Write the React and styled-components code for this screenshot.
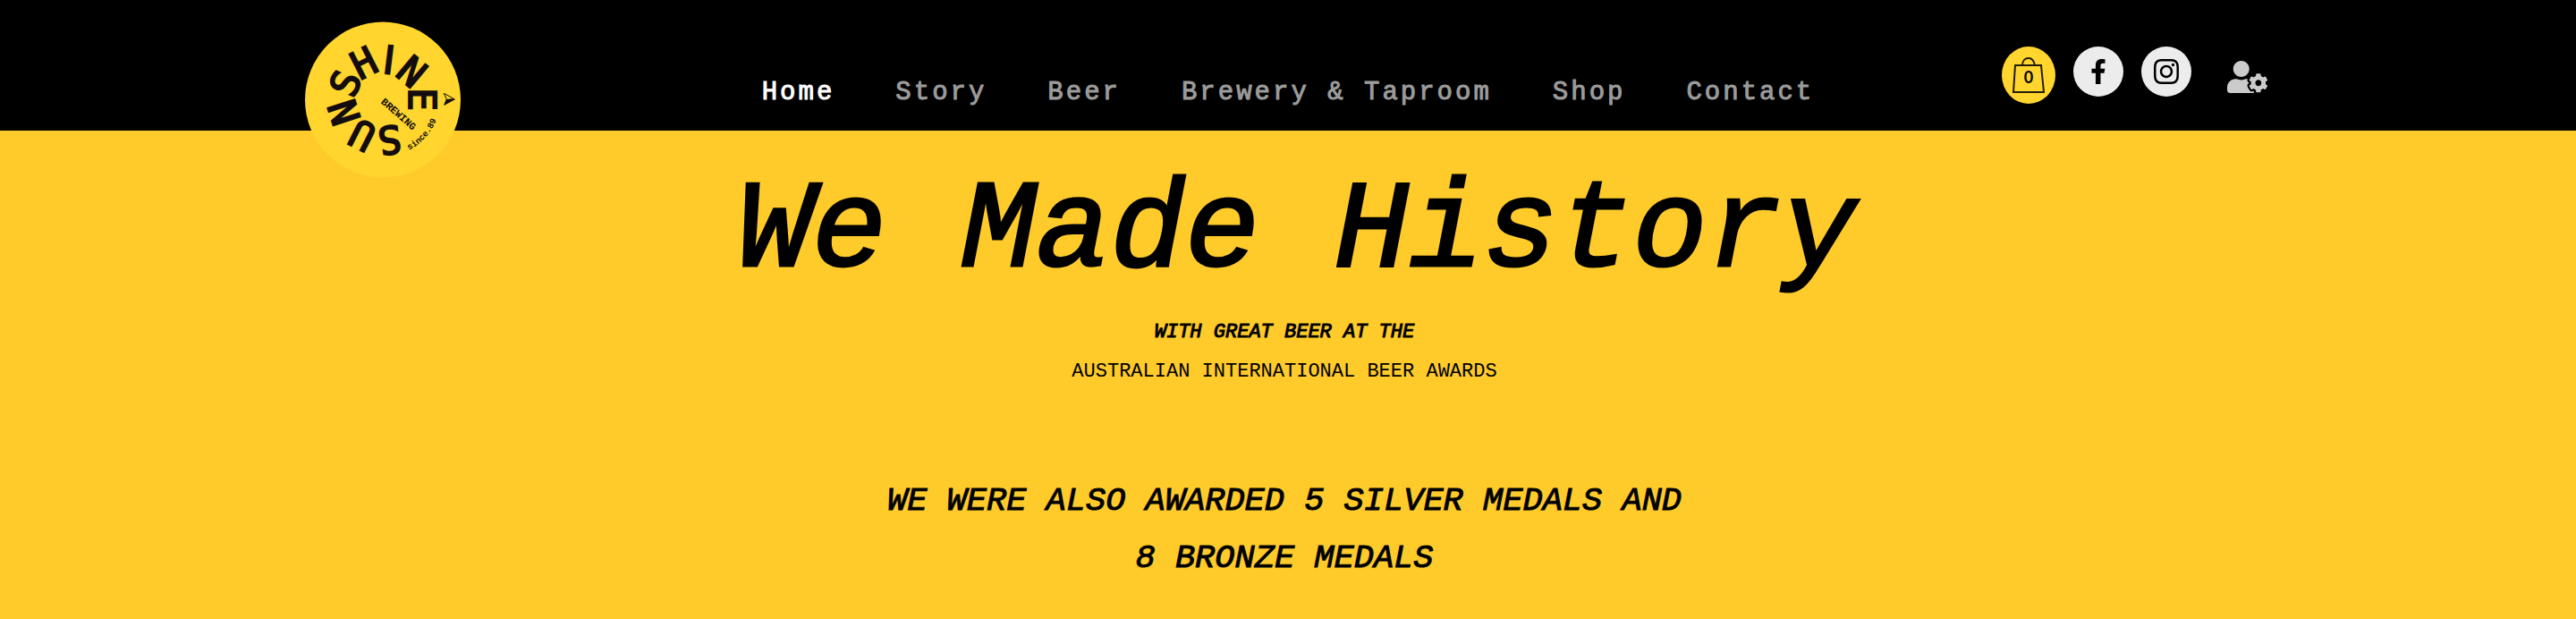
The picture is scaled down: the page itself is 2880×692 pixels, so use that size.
import React from "react";
import styled, { createGlobalStyle } from "styled-components";
import { FaFacebookF, FaInstagram, FaUserCog } from "react-icons/fa";

const mono = '"Liberation Mono", "Courier New", monospace';

const GlobalStyle = createGlobalStyle`
  *, *::before, *::after { box-sizing: border-box; }
  html { background: #ffcb2b; }
  body { margin: 0; font-family: ${mono}; color: #000; }
`;

const Header = styled.header`
  display: flex;
  justify-content: center;
  background: #000;
`;

const HeaderInner = styled.div`
  display: grid;
  grid-template-columns: 1fr auto 1fr;
  grid-template-rows: 146px;
  width: 100%;
  max-width: 2198px;
`;

const LogoLink = styled.a`
  justify-self: start;
  align-self: start;
  padding-top: 24px;
  svg { display: block; width: 174px; height: 175px; }
`;

const Nav = styled.nav`
  display: flex;
  align-items: flex-end;
  gap: 68px;
  padding-bottom: 22px;
`;

const NavLink = styled.a`
  color: ${(p) => (p.$active ? "#fff" : "#9b9b9b")};
  font-size: 29px;
  line-height: 40px;
  letter-spacing: 3px;
  white-space: nowrap;
  text-decoration: none;
  -webkit-text-stroke: 1px currentColor;
`;

const Actions = styled.div`
  display: flex;
  justify-self: end;
  align-items: flex-start;
  gap: 20px;
  padding: 52px 4px 0 0;
`;

const CartButton = styled.button`
  display: grid;
  place-items: center;
  width: 60px;
  height: 64px;
  padding: 0;
  border: 0;
  border-radius: 50%;
  background: #ffd52e;
  cursor: pointer;
  > * { grid-area: 1 / 1; }
`;

const CartCount = styled.span`
  padding-top: 4px;
  font: 700 18px/24px Lato, sans-serif;
  color: #000;
`;

const SocialLink = styled.a`
  display: flex;
  align-items: center;
  justify-content: center;
  width: 56px;
  height: 56px;
  border-radius: 50%;
  background: #ececec;
  color: #000;
`;

const AccountButton = styled.button`
  display: flex;
  margin: 16px 0 0 20px;
  padding: 0;
  border: 0;
  background: none;
  color: #cbcbcb;
  cursor: pointer;
  svg { width: 45px; height: 36px; }
`;

const Hero = styled.main`
  padding: 34px 24px 38px;
  text-align: center;
`;

const Title = styled.h1`
  margin: 0 0 10px;
  padding-left: 20px;
  font-size: 139px;
  font-style: italic;
  font-weight: 400;
  line-height: 160px;
  -webkit-text-stroke: 3px currentColor;
`;

const Lead = styled.p`
  margin: 0;
  padding-right: 8px;
  font-size: 22px;
  font-style: ${(p) => (p.$strong ? "italic" : "normal")};
  line-height: 44px;
  -webkit-text-stroke: ${(p) => (p.$strong ? "1px" : "0")} currentColor;
`;

const Medals = styled.h2`
  max-width: 910px;
  margin: 90px auto 0;
  padding-right: 8px;
  font-size: 37px;
  font-style: italic;
  font-weight: 400;
  line-height: 64px;
  -webkit-text-stroke: 1px currentColor;
`;

const ringLetters = [
  ["S", 317, 440, 173],
  ["U", 225, 424, -153],
  ["N", 164, 347, -108],
  ["S", 168, 249, -66],
  ["H", 230, 180, -27],
  ["I", 315, 170, 7],
  ["N", 392, 210, 40],
  ["E", 428, 303, 90],
];

function Logo() {
  return (
    <svg viewBox="33 42 522 525" role="img" aria-label="Sunshine Brewing">
      <circle cx="294" cy="304.5" r="261" fill="#ffd52e" />
      <g
        fill="#140d10"
        stroke="#140d10"
        strokeWidth="6"
        fontFamily='"DejaVu Sans Mono", monospace'
        fontSize="130"
        textAnchor="middle"
      >
        {ringLetters.map(([letter, x, y, turn], i) => (
          <text
            key={i}
            y="47"
            fontFamily={letter === "I" ? '"DejaVu Sans", sans-serif' : undefined}
            transform={`translate(${x} ${y}) rotate(${turn})`}
          >
            {letter}
          </text>
        ))}
      </g>
      <g fill="#140d10" fontFamily={mono}>
        <text fontSize="34" fontWeight="700" transform="translate(286 314) rotate(41)">
          BREWING
        </text>
        <path id="since-arc" d="M382 473A190 190 0 0 0 484 330" fill="none" />
        <text fontSize="29" fontWeight="700">
          <textPath href="#since-arc">since.89</textPath>
        </text>
      </g>
      <path d="M499 283L535 303L500 322L508 303Z" fill="none" stroke="#140d10" strokeWidth="3" />
      <path d="M535 303L500 322L508 303L528 301Z" fill="#140d10" />
    </svg>
  );
}

function Bag() {
  return (
    <svg width="38" height="42" viewBox="0 0 38 42" fill="none" stroke="#241d05" strokeWidth="2" aria-hidden="true">
      <path d="M4 10H33L36 40H2Z" />
      <path d="M12 10C12 5 15 2 19 2S25 5 26 10" />
    </svg>
  );
}

const pages = ["Home", "Story", "Beer", "Brewery & Taproom", "Shop", "Contact"];

export default function App() {
  return (
    <>
      <GlobalStyle />
      <Header>
        <HeaderInner>
          <LogoLink href="#home">
            <Logo />
          </LogoLink>
          <Nav aria-label="Main">
            {pages.map((page, i) => (
              <NavLink key={page} href={`#page-${i}`} $active={i === 0}>
                {page}
              </NavLink>
            ))}
          </Nav>
          <Actions>
            <CartButton type="button" aria-label="Cart, 0 items">
              <Bag />
              <CartCount>0</CartCount>
            </CartButton>
            <SocialLink href="#facebook" aria-label="Facebook">
              <FaFacebookF size={28} />
            </SocialLink>
            <SocialLink href="#instagram" aria-label="Instagram">
              <FaInstagram size={32} />
            </SocialLink>
            <AccountButton type="button" aria-label="Account settings">
              <FaUserCog />
            </AccountButton>
          </Actions>
        </HeaderInner>
      </Header>
      <Hero>
        <Title>We Made History</Title>
        <Lead $strong>WITH GREAT BEER AT THE</Lead>
        <Lead>AUSTRALIAN INTERNATIONAL BEER AWARDS</Lead>
        <Medals>WE WERE ALSO AWARDED 5 SILVER MEDALS AND 8 BRONZE MEDALS</Medals>
      </Hero>
    </>
  );
}
